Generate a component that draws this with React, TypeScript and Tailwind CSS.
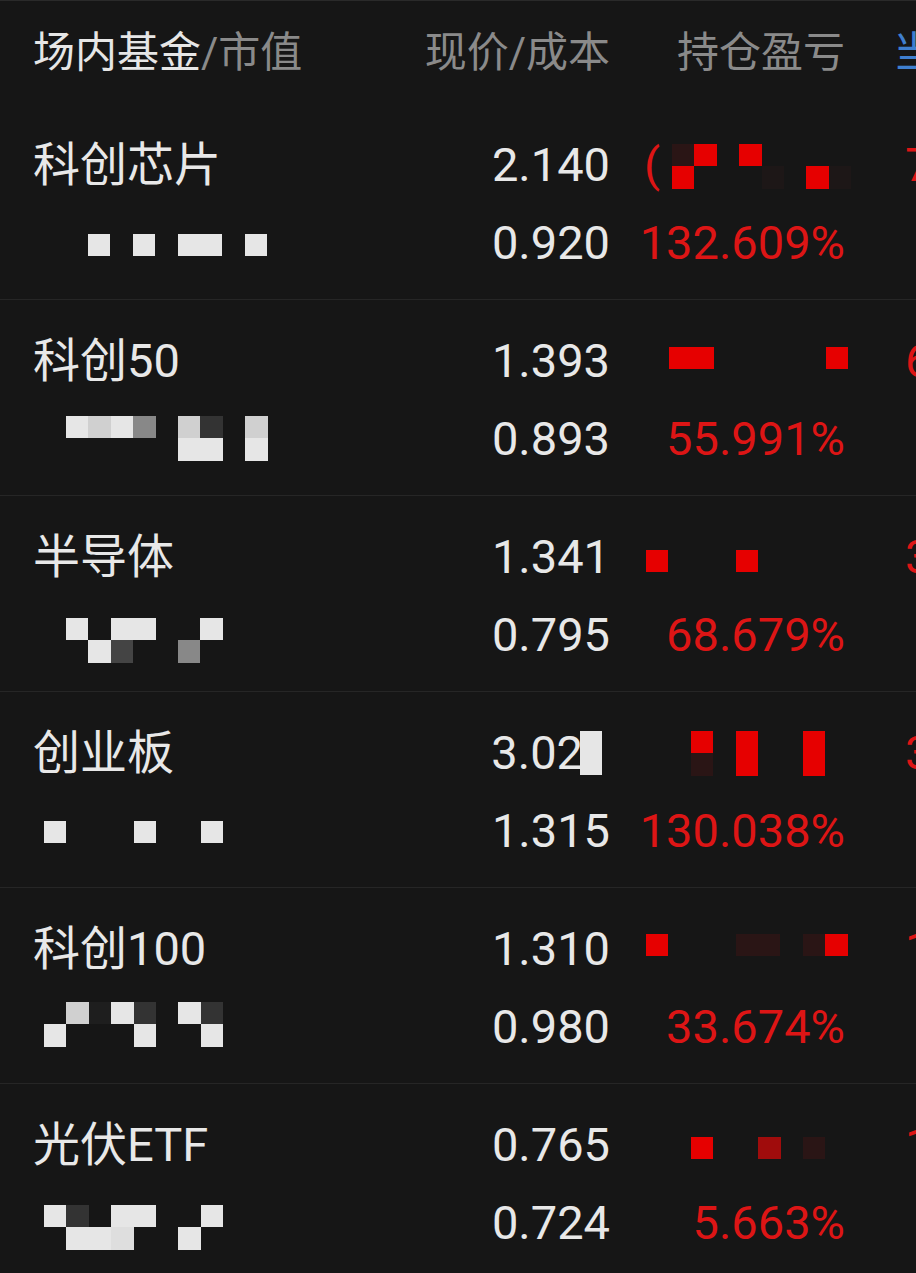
import clsx from "clsx";

const cellColor: Record<string, string> = {
  ".": "bg-transparent",
  w: "bg-[#e6e6e6]",
  l: "bg-[#d0d0d0]",
  k: "bg-[#dedede]",
  g: "bg-[#888888]",
  d: "bg-[#333333]",
  e: "bg-[#444444]",
  f: "bg-[#1e1e1e]",
  r: "bg-[#e60000]",
  D: "bg-[#2a1515]",
  F: "bg-[#1d1717]",
  M: "bg-[#a00c0c]",
};

type MosaicData = { pos: string; rows: string[] };

type Fund = {
  name: string;
  price: string;
  cost: string;
  pct: string;
  today: string;
  left: MosaicData;
  red: MosaicData;
  paren?: boolean;
  priceCover?: boolean;
};

const funds: Fund[] = [
  {
    name: "科创芯片",
    price: "2.140",
    cost: "0.920",
    pct: "132.609%",
    today: "712.40",
    left: { pos: "ml-[88px] mt-[30px]", rows: ["w.w.ww.w"] },
    red: { pos: "ml-[12px] mt-[18px]", rows: ["Dr.r", "r...F.rF"] },
    paren: true,
  },
  {
    name: "科创50",
    price: "1.393",
    cost: "0.893",
    pct: "55.991%",
    today: "628.15",
    left: { pos: "ml-[66px] mt-[16px]", rows: ["wlwg.ld.l", ".....ww.w"] },
    red: { pos: "ml-[59px] mt-[25px]", rows: ["rr.....r"] },
  },
  {
    name: "半导体",
    price: "1.341",
    cost: "0.795",
    pct: "68.679%",
    today: "325.80",
    left: { pos: "ml-[66px] mt-[22px]", rows: ["w.ww..w", ".we..g"] },
    red: { pos: "ml-[36px] mt-[32px]", rows: ["r...r"] },
  },
  {
    name: "创业板",
    price: "3.02",
    cost: "1.315",
    pct: "130.038%",
    today: "341.26",
    left: { pos: "ml-[44px] mt-[29px]", rows: ["w...w..w"] },
    red: { pos: "ml-[81px] mt-[17px]", rows: ["r.r..r", "D.r..r"] },
    priceCover: true,
  },
  {
    name: "科创100",
    price: "1.310",
    cost: "0.980",
    pct: "33.674%",
    today: "158.32",
    left: { pos: "ml-[44px] mt-[14px]", rows: [".lfwd.wd", "w...w..w"] },
    red: { pos: "ml-[36px] mt-[24px]", rows: ["r...DD.Dr"] },
  },
  {
    name: "光伏ETF",
    price: "0.765",
    cost: "0.724",
    pct: "5.663%",
    today: "112.05",
    left: { pos: "ml-[44px] mt-[21px]", rows: ["wd.ww..w", ".wwk..w"] },
    red: { pos: "ml-[81px] mt-[31px]", rows: ["r..M.D"] },
  },
];

function Mosaic({ data }: { data: MosaicData }) {
  return (
    <div className={clsx("flex flex-col", data.pos)}>
      {data.rows.map((row, i) => (
        <div key={i} className="flex">
          {row.split("").map((c, j) => (
            <div key={j} className={clsx("w-[22.4px] h-[22.4px]", cellColor[c])} />
          ))}
        </div>
      ))}
    </div>
  );
}

function FundRow({ f }: { f: Fund }) {
  return (
    <div className="h-[196px] flex pt-[22px] border-b border-[#262626] whitespace-nowrap">
      <div className="w-[403px] shrink-0 flex flex-col">
        <div className="h-[78px] leading-[78px] pl-[33px] text-[#e8e8e8]">{f.name}</div>
        <div className="h-[78px] flex items-start">
          <Mosaic data={f.left} />
        </div>
      </div>
      <div className="w-[207px] shrink-0 flex flex-col text-[#e8e8e8]">
        <div className="h-[78px] leading-[78px] flex justify-end items-center">
          <span>{f.price}</span>
          {f.priceCover && <div className="w-[22px] h-[44px] bg-[#e6e6e6] -ml-[3px] mr-[8px]" />}
        </div>
        <div className="h-[78px] leading-[78px] text-right">{f.cost}</div>
      </div>
      <div className="w-[235px] shrink-0 flex flex-col">
        <div className="h-[78px] flex items-start">
          {f.paren && (
            <span className="ml-[34px] leading-[78px] text-[#dd1515]">(</span>
          )}
          <Mosaic data={f.red} />
        </div>
        <div className="h-[78px] leading-[78px] text-right text-[#dd1515]">{f.pct}</div>
      </div>
      <div className="ml-[60px] shrink-0 flex flex-col">
        <div className="h-[78px] leading-[78px] text-[#dd1515]">{f.today}</div>
      </div>
    </div>
  );
}

export default function App() {
  return (
    <div className="w-[916px] h-[1273px] overflow-hidden bg-[#161616] border-t border-[#2a2a2a] font-[Roboto,'Noto_Sans_CJK_SC',sans-serif] text-[47px]">
      <div className="h-[103px] flex items-center whitespace-nowrap text-[42px] text-[#8a8a8a]">
        <div className="w-[403px] shrink-0 pl-[33px]">
          <span className="text-[#e6e6e6]">场内基金</span>
          <span>/市值</span>
        </div>
        <div className="w-[207px] shrink-0 text-right">现价/成本</div>
        <div className="w-[235px] shrink-0 text-right">持仓盈亏</div>
        <div className="ml-[48px] shrink-0 text-[#3f7fcf]">当日盈亏</div>
      </div>
      {funds.map((f) => (
        <FundRow key={f.name} f={f} />
      ))}
    </div>
  );
}
